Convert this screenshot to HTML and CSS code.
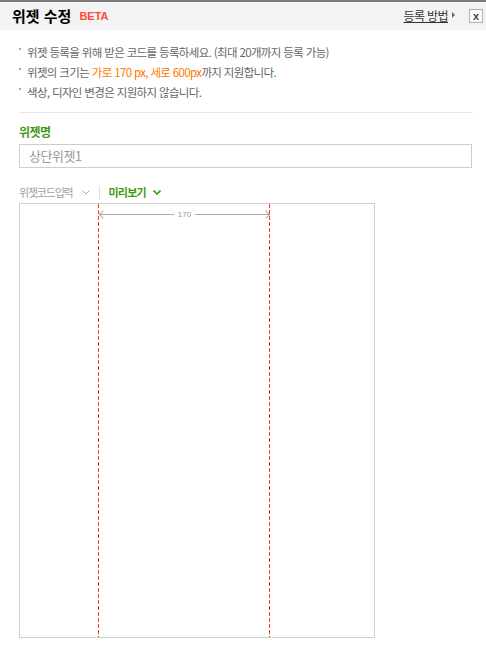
FILE: index.html
```html
<!DOCTYPE html>
<html lang="ko">
<head>
<meta charset="utf-8">
<title>위젯 수정</title>
<link rel="stylesheet" href="styles.css">
</head>
<body>
<div class="header">
  <h1 class="title">위젯 수정 <span class="beta">BETA</span></h1>
  <div class="header-right">
    <a class="help" href="#">등록 방법</a>
    <span class="tri"></span>
    <button class="close" type="button">x</button>
  </div>
</div>
<div class="content">
  <ul class="notes">
    <li>위젯 등록을 위해 받은 코드를 등록하세요. (최대 20개까지 등록 가능)</li>
    <li>위젯의 크기는 <span class="hl">가로 170 px, 세로 600px</span>까지 지원합니다.</li>
    <li>색상, 디자인 변경은 지원하지 않습니다.</li>
  </ul>
  <hr class="sep">
  <div class="label">위젯명</div>
  <div class="input">상단위젯1</div>
  <div class="tabs">
    <span class="tab">위젯코드입력 <svg class="chev" width="8" height="5" viewBox="0 0 8 5"><path d="M0.5 0.5 L4 4 L7.5 0.5" fill="none" stroke="#aaa" stroke-width="1"/></svg></span>
    <span class="tab-sep"></span>
    <span class="tab active">미리보기 <svg class="chev" width="8" height="5" viewBox="0 0 8 5"><path d="M0.5 0.5 L4 4 L7.5 0.5" fill="none" stroke="#3f9b12" stroke-width="1.6"/></svg></span>
  </div>
  <div class="preview">
    <div class="guide guide-left"></div>
    <div class="guide guide-right"></div>
    <div class="ruler">
      <span class="ruler-line left"></span>
      <span class="ruler-label">170</span>
      <span class="ruler-line right"></span>
    </div>
  </div>
</div>
</body>
</html>
```

FILE: styles.css
```css
* { box-sizing: border-box; }
html, body { margin: 0; padding: 0; background: #fff; }
body {
  font-family: "Noto Sans CJK KR", "Noto Sans", sans-serif;
  color: #666;
  width: 486px;
  height: 649px;
  overflow: hidden;
}
.header {
  height: 30px;
  background: #f3f3f3;
  border-top: 2px solid #7a7a7a;
  display: flex;
  align-items: center;
  justify-content: space-between;
  padding: 0 3px 0 12px;
}
.title {
  margin: 0;
  font-size: 15px;
  font-weight: bold;
  color: #000;
  letter-spacing: 0;
  line-height: 20px;
  display: flex;
  align-items: center;
}
.beta {
  font-family: "Liberation Sans", Arial, sans-serif;
  font-size: 11px;
  font-weight: bold;
  color: #ff4b36;
  margin-left: 8px;
  letter-spacing: 0;
}
.header-right {
  display: flex;
  align-items: center;
}
.help {
  font-size: 12px;
  color: #333;
  text-decoration: underline;
  letter-spacing: -0.6px;
  line-height: 16px;
}
.tri {
  width: 0;
  height: 0;
  border-left: 3px solid #666;
  border-top: 3px solid transparent;
  border-bottom: 3px solid transparent;
  margin: 0 14px 2px 4px;
}
.close {
  width: 14px;
  height: 14px;
  padding: 0;
  border: 1px solid #b3b3b3;
  background: #fbfbfb;
  font-family: "Liberation Sans", Arial, sans-serif;
  font-weight: bold;
  font-size: 11px;
  line-height: 10px;
  color: #444;
}
.content {
  padding: 0 13px 0 19px;
}
.notes {
  list-style: none;
  margin: 12px 0 0;
  padding: 0;
  font-size: 11.5px;
  line-height: 20px;
  letter-spacing: -0.65px;
}
.notes li {
  position: relative;
  padding-left: 8px;
}
.notes li::before {
  content: "";
  position: absolute;
  left: 0;
  top: 6px;
  width: 2px;
  height: 2px;
  background: #aaa;
}
.hl { color: #ff7a00; }
.sep {
  margin: 10px 0 0;
  border: 0;
  border-top: 1px solid #e6e6e6;
  height: 0;
}
.label {
  margin-top: 11px;
  font-size: 12px;
  font-weight: bold;
  color: #3f9b12;
  line-height: 16px;
  letter-spacing: -0.5px;
}
.input {
  margin-top: 4px;
  margin-right: 1px;
  height: 24px;
  border: 1px solid #cdcdcd;
  padding: 0 9px;
  font-size: 13px;
  line-height: 22px;
  color: #999;
  letter-spacing: -0.5px;
}
.tabs {
  margin-top: 16px;
  height: 16px;
  display: flex;
  align-items: center;
  font-size: 11px;
  letter-spacing: -1.2px;
}
.tab {
  color: #a0a0a0;
  display: flex;
  align-items: center;
  line-height: 16px;
}
.tab .chev { margin-left: 9px; }
.tab.active .chev { margin-left: 7px; }
.tab.active {
  color: #3f9b12;
  font-weight: bold;
  letter-spacing: -0.8px;
}
.tab-sep {
  width: 1px;
  height: 13px;
  background: #e0e0e0;
  margin: 0 9px 0 9px;
}
.preview {
  position: relative;
  margin-top: 3px;
  width: 356px;
  height: 435px;
  border: 1px solid #cfcfcf;
}
.guide {
  position: absolute;
  top: 0;
  bottom: 0;
  width: 1px;
  background: repeating-linear-gradient(to bottom, #ff3a0f 0 4px, transparent 4px 6px);
}
.guide-left { left: 78px; }
.guide-right { left: 249px; }
.ruler {
  position: absolute;
  left: 80px;
  top: 4px;
  width: 169px;
  height: 12px;
  display: flex;
  align-items: center;
}
.ruler-line {
  flex: 1;
  height: 1px;
  background: #aaa;
  position: relative;
}
.ruler-line.left::before,
.ruler-line.right::after {
  content: "";
  position: absolute;
  top: -3px;
  width: 5px;
  height: 5px;
  border-color: #aaa;
  border-style: solid;
  border-width: 0;
}
.ruler-line.left::before {
  left: 0;
  border-left-width: 1px;
  border-bottom-width: 1px;
  transform: translateY(0.5px) rotate(45deg);
}
.ruler-line.right::after {
  right: 0;
  border-right-width: 1px;
  border-top-width: 1px;
  transform: translateY(0.5px) rotate(45deg);
}
.ruler-label {
  font-family: "Liberation Sans", Arial, sans-serif;
  font-size: 8px;
  color: #999;
  padding: 0 4px;
  letter-spacing: 0;
}
```
